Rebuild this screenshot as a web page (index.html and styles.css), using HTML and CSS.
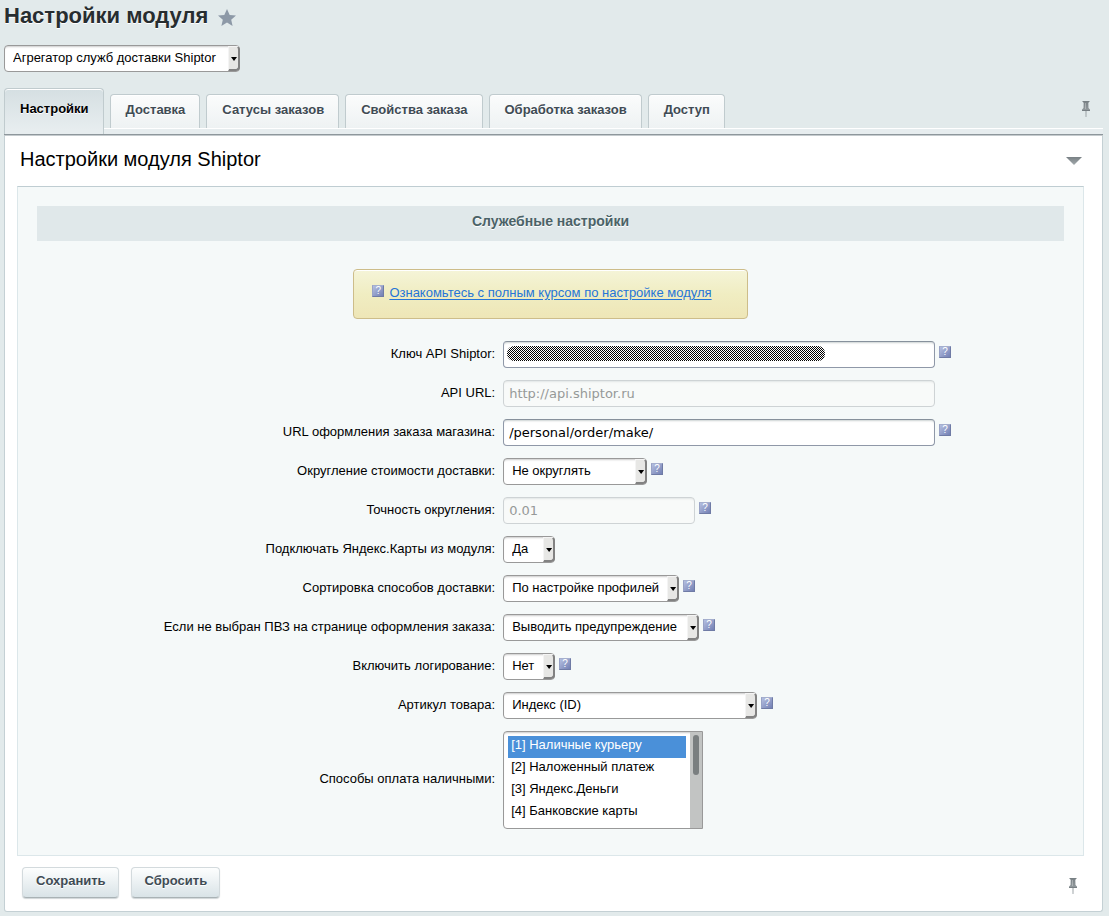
FILE: index.html
```html
<!DOCTYPE html>
<html lang="ru">
<head>
<meta charset="utf-8">
<title>Настройки модуля</title>
<link rel="stylesheet" href="styles.css">
</head>
<body>
<svg class="defs" aria-hidden="true">
  <defs>
    <linearGradient id="metal" x1="0" y1="0" x2="0" y2="1"><stop offset="0" stop-color="#788084"/><stop offset="1" stop-color="#a4abae"/></linearGradient>
    <symbol id="pin" viewBox="0 0 10 16"><path fill="url(#metal)" d="M2 0h6v1.500H7.300L7.500 7 9 8.500V10H5.500v6h-1v-6H1V8.500L2.500 7l.2-5.500H2z"/><path fill="#788084" d="M1.500 0h7v1h-7zM1 9h8v1H1z"/><path fill="#fff" opacity=".3" d="M4 2h1v6H4z"/></symbol>
  </defs>
</svg>
<header class="title">
  <h1>Настройки модуля</h1>
  <svg class="star" viewBox="0 0 18 17" role="img" aria-label="Избранное"><path d="M9 0l2.700 5.900 6.300.6-4.800 4.200L14.600 17 9 13.600 3.400 17l1.400-6.300L0 6.500l6.300-.6z"/></svg>
</header>
<div class="module">
  <span class="select"><select aria-label="Модуль"><option>Агрегатор служб доставки Shiptor</option></select></span>
</div>
<nav class="tabs">
  <button class="tab active" type="button">Настройки</button>
  <button class="tab" type="button">Доставка</button>
  <button class="tab" type="button">Сатусы заказов</button>
  <button class="tab" type="button">Свойства заказа</button>
  <button class="tab" type="button">Обработка заказов</button>
  <button class="tab" type="button">Доступ</button>
  <svg class="pin"><use href="#pin"/></svg>
</nav>
<form class="panel">
  <div class="panel-head">
    <h2>Настройки модуля Shiptor</h2>
    <svg class="collapse" viewBox="0 0 16 8"><path fill="url(#metal)" d="M0 0h16L8 8z"/></svg>
  </div>
  <div class="content">
    <h3>Служебные настройки</h3>
    <p class="notice"><span class="help">?</span><a href="#">Ознакомьтесь с полным курсом по настройке модуля</a></p>
    <div class="rows">
      <label for="key">Ключ API Shiptor:</label>
      <div class="field"><span class="secret"><input id="key" class="wide" type="text"></span><span class="help">?</span></div>
      <label for="url">API URL:</label>
      <div class="field"><input id="url" class="wide" type="text" value="http://api.shiptor.ru" disabled></div>
      <label for="order">URL оформления заказа магазина:</label>
      <div class="field"><input id="order" class="wide" type="text" value="/personal/order/make/"><span class="help">?</span></div>
      <label for="round">Округление стоимости доставки:</label>
      <div class="field"><span class="select w-round"><select id="round"><option>Не округлять</option></select></span><span class="help">?</span></div>
      <label for="prec">Точность округления:</label>
      <div class="field"><input id="prec" class="short" type="text" value="0.01" disabled><span class="help">?</span></div>
      <label for="maps">Подключать Яндекс.Карты из модуля:</label>
      <div class="field"><span class="select w-bool"><select id="maps"><option>Да</option><option>Нет</option></select></span></div>
      <label for="sort">Сортировка способов доставки:</label>
      <div class="field"><span class="select w-sort"><select id="sort"><option>По настройке профилей</option></select></span><span class="help">?</span></div>
      <label for="pvz">Если не выбран ПВЗ на странице оформления заказа:</label>
      <div class="field"><span class="select w-warn"><select id="pvz"><option>Выводить предупреждение</option></select></span><span class="help">?</span></div>
      <label for="log">Включить логирование:</label>
      <div class="field"><span class="select w-bool"><select id="log"><option>Нет</option><option>Да</option></select></span><span class="help">?</span></div>
      <label for="sku">Артикул товара:</label>
      <div class="field"><span class="select w-sku"><select id="sku"><option>Индекс (ID)</option></select></span><span class="help">?</span></div>
      <label for="cash">Способы оплата наличными:</label>
      <div class="field"><span class="list"><select id="cash" multiple size="4"><option class="chosen">[1] Наличные курьеру</option><option>[2] Наложенный платеж</option><option>[3] Яндекс.Деньги</option><option>[4] Банковские карты</option></select></span></div>
    </div>
  </div>
  <div class="actions">
    <button class="btn" type="submit">Сохранить</button>
    <button class="btn" type="reset">Сбросить</button>
    <svg class="pin"><use href="#pin"/></svg>
  </div>
</form>
</body>
</html>
```
FILE: styles.css
```css
*, *::before, *::after { box-sizing: border-box; }
body {
  margin: 0;
  padding: 0 6px 4px 4px;
  background: #e2eaeb;
  color: #000;
  font: 13px/20px "Liberation Sans", Arial, sans-serif;
}
h1, h2, h3, p { margin: 0; }
.defs { position: absolute; width: 0; height: 0; }

.title { display: flex; align-items: center; gap: 10px; height: 32px; }
.title h1 { font-size: 22px; line-height: 32px; color: #272d30; text-shadow: 0 1px #fff; }
.star { width: 18px; height: 17px; margin-top: 3px; fill: #8d99a7; }
.module { display: flex; margin-top: 13px; }

.select { position: relative; display: inline-block; }
.select select {
  display: block;
  width: 100%;
  height: 27px;
  padding: 0 16px 2px 8px;
  appearance: none;
  border: 1px solid #999;
  border-radius: 4px;
  background: #fff;
  box-shadow: inset 0 2px 2px -1px #ccc;
  color: #000;
  font: 13px "Liberation Sans", Arial, sans-serif;
}
.select::before {
  content: "";
  position: absolute;
  top: 1px; right: 0; bottom: 1px;
  width: 12px;
  border: 2px solid;
  border-width: 1px 2px 2px 1px;
  border-color: #f4f4f4 #828282 #828282 #f4f4f4;
  border-radius: 0 4px 4px 0;
  background: #e7e7e5;
  pointer-events: none;
}
.select::after {
  content: "";
  position: absolute;
  top: 12px; right: 3px;
  width: 6px; height: 4px;
  background: #000;
  clip-path: polygon(0 0, 100% 0, 50% 100%);
  pointer-events: none;
}
.module .select { width: 236px; }
.w-round { width: 144px; }
.w-bool { width: 52px; }
.w-sort { width: 176px; }
.w-warn { width: 196px; }
.w-sku { width: 254px; }

.tabs {
  display: flex;
  align-items: flex-end;
  gap: 6px;
  height: 48px;
  margin-top: 16px;
  padding-bottom: 8px;
  background: linear-gradient(#fff 0 1px, #e7edef 1px 6px, #8e979c 6px 7px, #c5cbce 7px) 0 100% / 100% 8px no-repeat;
}
.tab {
  height: 34px;
  padding: 0 14px 4px 15px;
  border: 1px solid #c0cbce;
  border-bottom: 0;
  border-radius: 4px 4px 0 0;
  background: linear-gradient(#fbfcfc, #eef2f3);
  box-shadow: inset 0 1px #fff;
  color: #3f4b54;
  font: bold 13px "Liberation Sans", Arial, sans-serif;
  text-shadow: 0 1px #fff;
}
.tab.active {
  align-self: flex-start;
  height: 46px;
  padding-bottom: 6px;
  background: linear-gradient(#d5dfe2, #e7edef 90%);
  color: #000;
}
.pin { width: 10px; height: 16px; margin-left: auto; }
.tabs .pin { margin-right: 12px; margin-bottom: 11px; }

.panel {
  border: 1px solid #c4d0d4;
  border-top: 0;
  border-radius: 0 0 3px 3px;
  background: #fff;
  padding: 0 18px 13px 12px;
}
.panel-head { display: flex; align-items: center; justify-content: space-between; height: 50px; padding: 0 2px 4px 3px; }
.panel-head h2 { font-size: 20px; font-weight: normal; line-height: 24px; }
.collapse { width: 16px; height: 8px; margin-top: 4px; }
.content {
  padding: 19px 19px 26px;
  border: 1px solid #dce7ea;
  border-top-color: #bfcdd2;
  background: #f5f9f9;
}
.content h3 {
  padding-bottom: 4px;
  background: #e0e8ea;
  color: #4b6267;
  font-size: 14px;
  line-height: 31px;
  text-align: center;
  text-shadow: 0 1px #fff;
}
.notice {
  display: flex;
  gap: 5px;
  width: fit-content;
  margin: 28px auto 22px;
  padding: 13px 35px 15px 18px;
  border: 1px solid #cdbd8a;
  border-radius: 4px;
  background: linear-gradient(#f5f4d8, #f0edc2 50%, #eee6b7);
  box-shadow: inset 0 1px #fff;
}
.notice a {
  color: #2675d7;
  text-decoration: underline;
  text-underline-offset: 2px;
}
.help {
  flex: none;
  width: 12px;
  height: 12px;
  border: 1px solid #7481ac;
  border-color: #a5afce #6f7ba5 #6f7ba5 #98a2c6;
  background: linear-gradient(135deg, #b5bfe0, #7380b4);
  color: #fff;
  font-size: 10px;
  line-height: 10px;
  text-align: center;
}
.notice .help { margin-top: 2px; }
.rows { display: grid; grid-template-columns: 45fr 55fr; row-gap: 12px; align-items: center; }
.rows label { padding: 0 4px 2px 0; text-align: right; }
.field { display: flex; align-items: flex-start; gap: 4px; padding-left: 4px; }
.field .help { margin-top: 5px; }
.field input {
  display: block;
  height: 27px;
  padding: 0 5px;
  border: 1px solid #8f98a8;
  border-top-color: #87919c;
  border-radius: 4px;
  background: #fff;
  box-shadow: inset 0 2px 2px -1px #ccd2d2;
  color: #000;
  font: 13px "DejaVu Sans", sans-serif;
}
.field input:disabled { border-color: #ced3d5; background: #f8faf9; box-shadow: inset 0 2px 2px -1px #e2e6e6; color: #969998; }
.field .wide { width: 432px; }
.field .short { width: 192px; }
.secret { position: relative; }
.secret::after {
  content: "";
  position: absolute;
  top: 5px; left: 4px;
  width: 318px; height: 15px;
  border-radius: 7px;
  background: repeating-conic-gradient(#000 0 25%, #fff 0 50%) 0 0 / 2px 2px;
  pointer-events: none;
}
.list { position: relative; width: 200px; height: 98px; }
.list select {
  width: 100%;
  height: 98px;
  padding: 4px 16px 4px 4px;
  overflow: hidden;
  scrollbar-width: none;
  border: 1px solid #999;
  border-radius: 4px 0 0 4px;
  background: #fff;
  box-shadow: inset 0 2px 2px -1px #ccc;
  color: #000;
  font: 13px "Liberation Sans", Arial, sans-serif;
}
.list option { height: 22px; padding: 1px 3px; line-height: 20px; }
.list .chosen { background: #4a90d9; color: #fff; }
.list::before {
  content: "";
  position: absolute;
  top: 1px; right: 1px; bottom: 1px;
  width: 12px;
  background: #c2c4c3;
  pointer-events: none;
}
.list::after {
  content: "";
  position: absolute;
  top: 4px; right: 4px;
  width: 6px; height: 40px;
  border-radius: 3px;
  background: #7a7f80;
  pointer-events: none;
}
.actions { display: flex; align-items: center; gap: 12px; padding: 11px 6px 0 5px; }
.btn {
  height: 31px;
  padding: 0 12px 4px 13px;
  border: 1px solid #d3dadd;
  border-bottom-color: #a9b2b5;
  border-radius: 4px;
  background: linear-gradient(#fdfefe, #d9e3e7);
  box-shadow: 0 1px 1px #d0d5d7;
  color: #3f4b54;
  font: bold 13px "Liberation Sans", Arial, sans-serif;
  text-shadow: 0 1px #fff;
}
.actions .pin { margin-top: 7px; }
```
